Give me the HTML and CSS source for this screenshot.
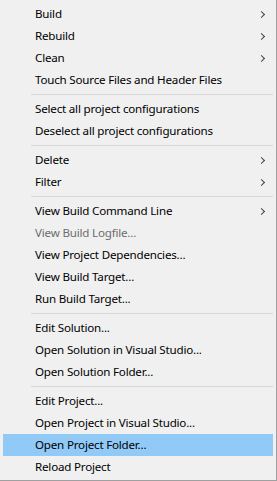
FILE: index.html
```html
<!DOCTYPE html>
<html lang="en">
<head>
	<meta charset="UTF-8">
	<title>Project menu</title>
	<link rel="stylesheet" href="styles.css">
</head>
<body>
	<div class="menu">
		<div class="item sub">Build</div>
		<div class="item sub">Rebuild</div>
		<div class="item sub">Clean</div>
		<div class="item">Touch Source Files and Header Files</div>
		<div class="sep"></div>
		<div class="item">Select all project configurations</div>
		<div class="item">Deselect all project configurations</div>
		<div class="sep"></div>
		<div class="item sub">Delete</div>
		<div class="item sub">Filter</div>
		<div class="sep"></div>
		<div class="item sub">View Build Command Line</div>
		<div class="item off">View Build Logfile...</div>
		<div class="item">View Project Dependencies...</div>
		<div class="item">View Build Target...</div>
		<div class="item">Run Build Target...</div>
		<div class="sep"></div>
		<div class="item">Edit Solution...</div>
		<div class="item">Open Solution in Visual Studio...</div>
		<div class="item">Open Solution Folder...</div>
		<div class="sep"></div>
		<div class="item">Edit Project...</div>
		<div class="item">Open Project in Visual Studio...</div>
		<div class="item hover">Open Project Folder...</div>
		<div class="item">Reload Project</div>
	</div>
</body>
</html>
```

FILE: styles.css
```css
*{margin:0;padding:0;box-sizing:border-box;}
body{
	background:#f0f0f0;
	font-family:"Noto Sans","Liberation Sans",sans-serif;
	font-size:11.6px;
	letter-spacing:-0.2px;
	color:#000;
}
.menu{
	width:277px;
	height:481px;
	padding:3px 3px 2px 3px;
	background:#f0f0f0;
	border-right:1px solid #a0a0a0;
	border-bottom:1px solid #a0a0a0;
}
.item{
	height:22px;
	line-height:22px;
	padding-left:32px;
	display:flex;
	align-items:center;
	justify-content:space-between;
}
.item.sub::after{
	content:"";
	width:4px;
	height:4px;
	border-right:1px solid #444;
	border-top:1px solid #444;
	transform:rotate(45deg);
	margin-right:9px;
}
.item.off{color:#6d6d6d;}
.item.hover{background:#91c9f7;}
.sep{
	height:7px;
	padding-top:3px;
	margin-left:28px;
}
.sep::before{
	content:"";
	display:block;
	height:1px;
	background:#d7d7d7;
}
```
